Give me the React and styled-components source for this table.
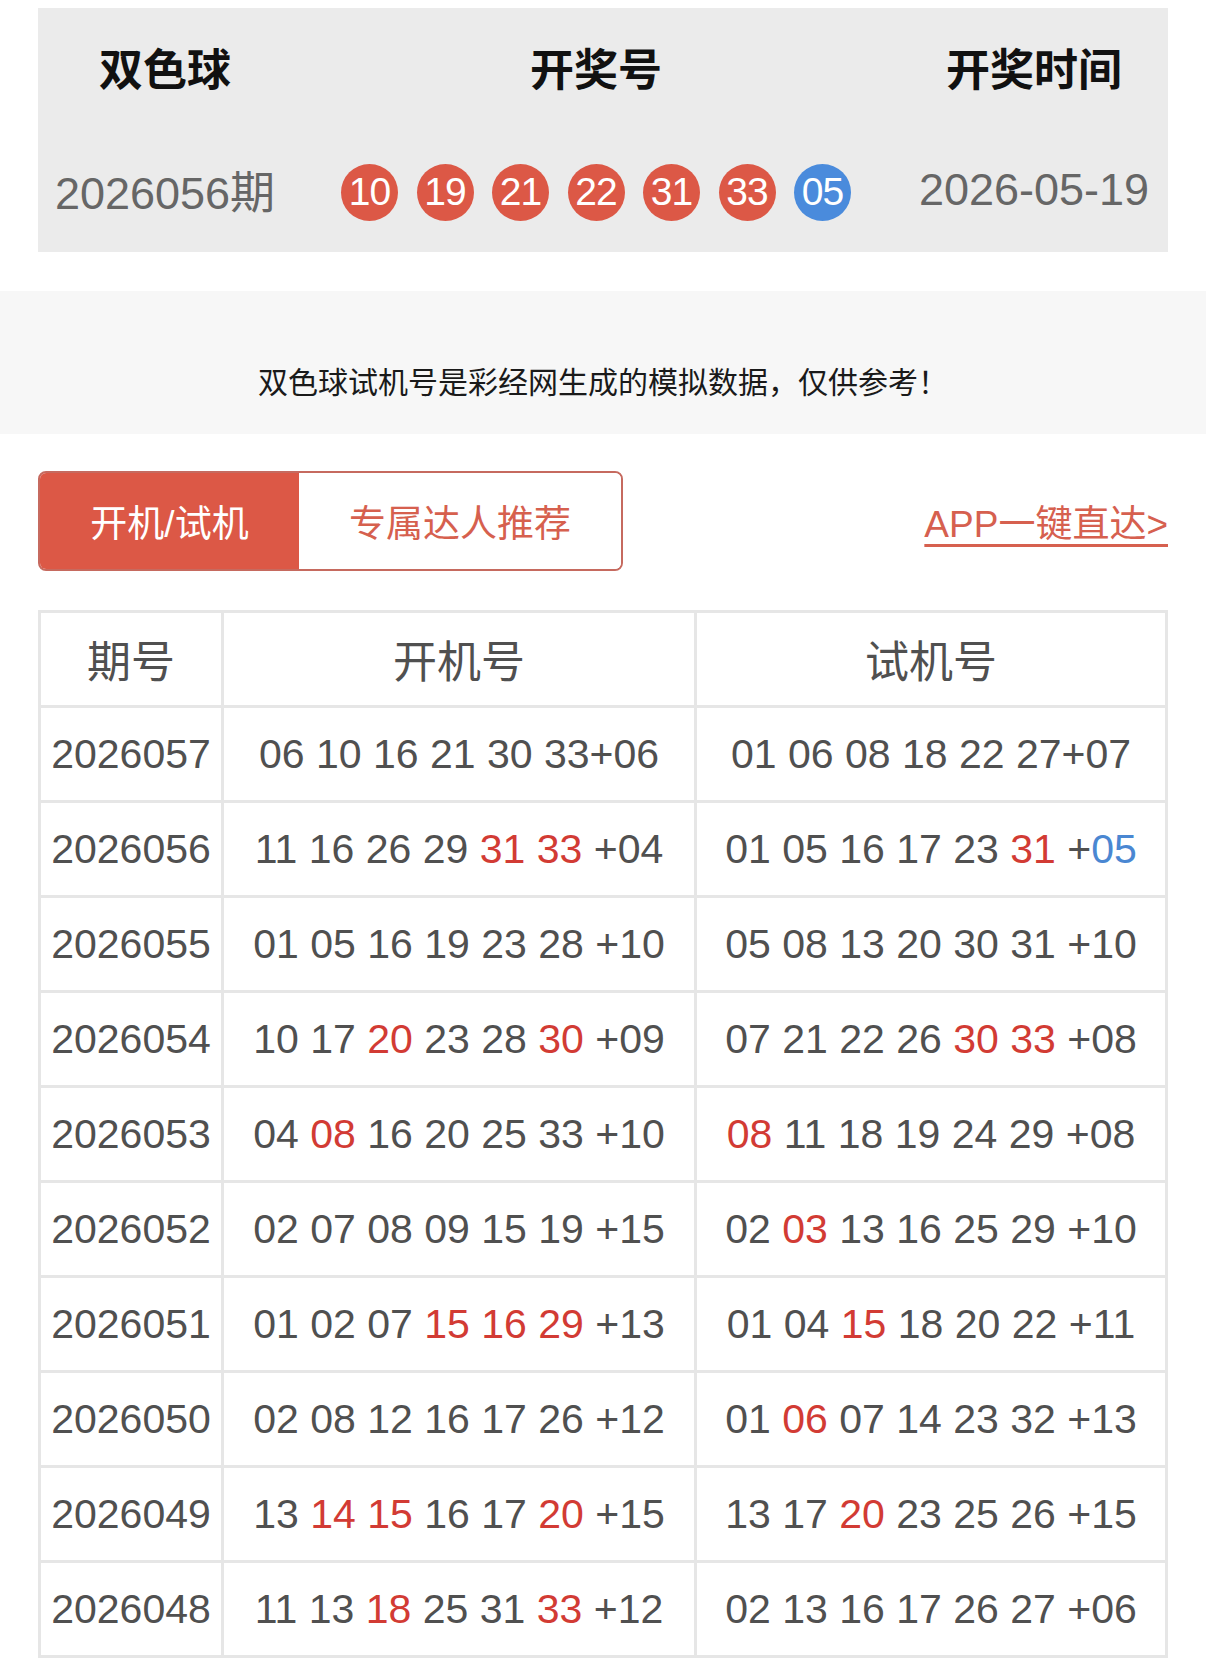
import React from "react";
import styled, { createGlobalStyle } from "styled-components";

const GlobalStyle = createGlobalStyle`
  body {
    margin: 0;
    background: #fff;
    font-family: "Liberation Sans", "Noto Sans CJK SC", sans-serif;
  }
`;

const red = "#dc5846";
const hitRed = "#d23b34";
const hitBlue = "#4a87d2";

const Page = styled.div`
  padding-top: 8px;
  width: 1206px;
`;

const DrawPanel = styled.section`
  margin: 0 38px;
  background: #ebebeb;
  display: grid;
  grid-template-columns: 254px 608px 1fr;
  grid-template-rows: 118px 126px;
  .title {
    display: flex;
    align-items: center;
    justify-content: center;
    font-size: 44px;
    font-weight: 700;
    color: #111;
  }
  .value {
    display: flex;
    align-items: center;
    justify-content: center;
    padding-top: 1px;
    font-size: 45px;
    color: #666;
  }
`;

const Balls = styled.div`
  display: flex;
  align-items: center;
  justify-content: center;
  gap: 18.5px;
  padding-top: 6px;
`;

const Ball = styled.span`
  width: 57px;
  height: 57px;
  border-radius: 50%;
  background: ${(p) => (p.$blue ? "#4a8bdc" : red)};
  color: #fff;
  font-size: 39px;
  letter-spacing: -1px;
  display: flex;
  align-items: center;
  justify-content: center;
`;

const NoteBar = styled.div`
  margin-top: 39px;
  background: #f7f7f7;
  height: 143px;
  box-sizing: border-box;
  padding-top: 74px;
  text-align: center;
  font-size: 30px;
  line-height: 36px;
  color: #1a1a1a;
`;

const Toolbar = styled.div`
  margin: 37px 38px 0;
  height: 100px;
  display: flex;
  align-items: center;
  justify-content: space-between;
`;

const Tabs = styled.div`
  display: flex;
  height: 100px;
  width: 585px;
  box-sizing: border-box;
  border: 2px solid #c66a5f;
  border-radius: 8px;
  overflow: hidden;
`;

const Tab = styled.button`
  border: none;
  margin: 0;
  padding: 0;
  font-family: inherit;
  font-size: 37px;
  width: ${(p) => (p.$active ? "259px" : "auto")};
  flex: ${(p) => (p.$active ? "none" : "1")};
  background: ${(p) => (p.$active ? red : "#fff")};
  color: ${(p) => (p.$active ? "#fff" : "#d6604e")};
  display: flex;
  align-items: center;
  justify-content: center;
`;

const AppLink = styled.a`
  font-size: 37px;
  color: #d6604f;
  text-decoration: underline;
  text-decoration-thickness: 3px;
  text-underline-offset: 7px;
`;

const Grid = styled.div`
  margin: 39px 38px 0;
  display: grid;
  grid-template-columns: 180px 470px 1fr;
  gap: 3px;
  padding: 3px;
  background: #e6e6e6;
`;

const Cell = styled.div`
  background: #fff;
  height: 92px;
  display: flex;
  align-items: center;
  justify-content: center;
  font-size: ${(p) => (p.$head ? "44px" : "41px")};
  color: #505050;
  white-space: pre;
`;

const Hit = styled.span`
  color: ${(p) => (p.$blue ? hitBlue : hitRed)};
`;

const rows = [
  ["2026057", "06 10 16 21 30 33+06", "01 06 08 18 22 27+07"],
  ["2026056", "11 16 26 29 [31] [33] +04", "01 05 16 17 23 [31] +{05}"],
  ["2026055", "01 05 16 19 23 28 +10", "05 08 13 20 30 31 +10"],
  ["2026054", "10 17 [20] 23 28 [30] +09", "07 21 22 26 [30] [33] +08"],
  ["2026053", "04 [08] 16 20 25 33 +10", "[08] 11 18 19 24 29 +08"],
  ["2026052", "02 07 08 09 15 19 +15", "02 [03] 13 16 25 29 +10"],
  ["2026051", "01 02 07 [15] [16] [29] +13", "01 04 [15] 18 20 22 +11"],
  ["2026050", "02 08 12 16 17 26 +12", "01 [06] 07 14 23 32 +13"],
  ["2026049", "13 [14] [15] 16 17 [20] +15", "13 17 [20] 23 25 26 +15"],
  ["2026048", "11 13 [18] 25 31 [33] +12", "02 13 16 17 26 27 +06"],
];

// [xx] = red hit, {xx} = blue hit
const Numbers = ({ text }) => (
  <span>
    {text.split(/(\[\d+\]|\{\d+\})/).map((part, i) => {
      if (part.startsWith("[")) return <Hit key={i}>{part.slice(1, -1)}</Hit>;
      if (part.startsWith("{"))
        return (
          <Hit key={i} $blue>
            {part.slice(1, -1)}
          </Hit>
        );
      return part;
    })}
  </span>
);

const balls = ["10", "19", "21", "22", "31", "33"];

const App = () => {
  return (
    <Page>
      <GlobalStyle />
      <DrawPanel>
        <div className="title">双色球</div>
        <div className="title">开奖号</div>
        <div className="title">开奖时间</div>
        <div className="value">2026056期</div>
        <Balls>
          {balls.map((b) => (
            <Ball key={b}>{b}</Ball>
          ))}
          <Ball $blue>05</Ball>
        </Balls>
        <div className="value">2026-05-19</div>
      </DrawPanel>

      <NoteBar>双色球试机号是彩经网生成的模拟数据，仅供参考！</NoteBar>

      <Toolbar>
        <Tabs>
          <Tab $active>开机/试机</Tab>
          <Tab>专属达人推荐</Tab>
        </Tabs>
        <AppLink>APP一键直达&gt;</AppLink>
      </Toolbar>

      <Grid>
        <Cell $head>期号</Cell>
        <Cell $head>开机号</Cell>
        <Cell $head>试机号</Cell>
        {rows.map(([issue, kai, shi]) => (
          <React.Fragment key={issue}>
            <Cell>{issue}</Cell>
            <Cell>
              <Numbers text={kai} />
            </Cell>
            <Cell>
              <Numbers text={shi} />
            </Cell>
          </React.Fragment>
        ))}
      </Grid>
    </Page>
  );
};

export default App;
